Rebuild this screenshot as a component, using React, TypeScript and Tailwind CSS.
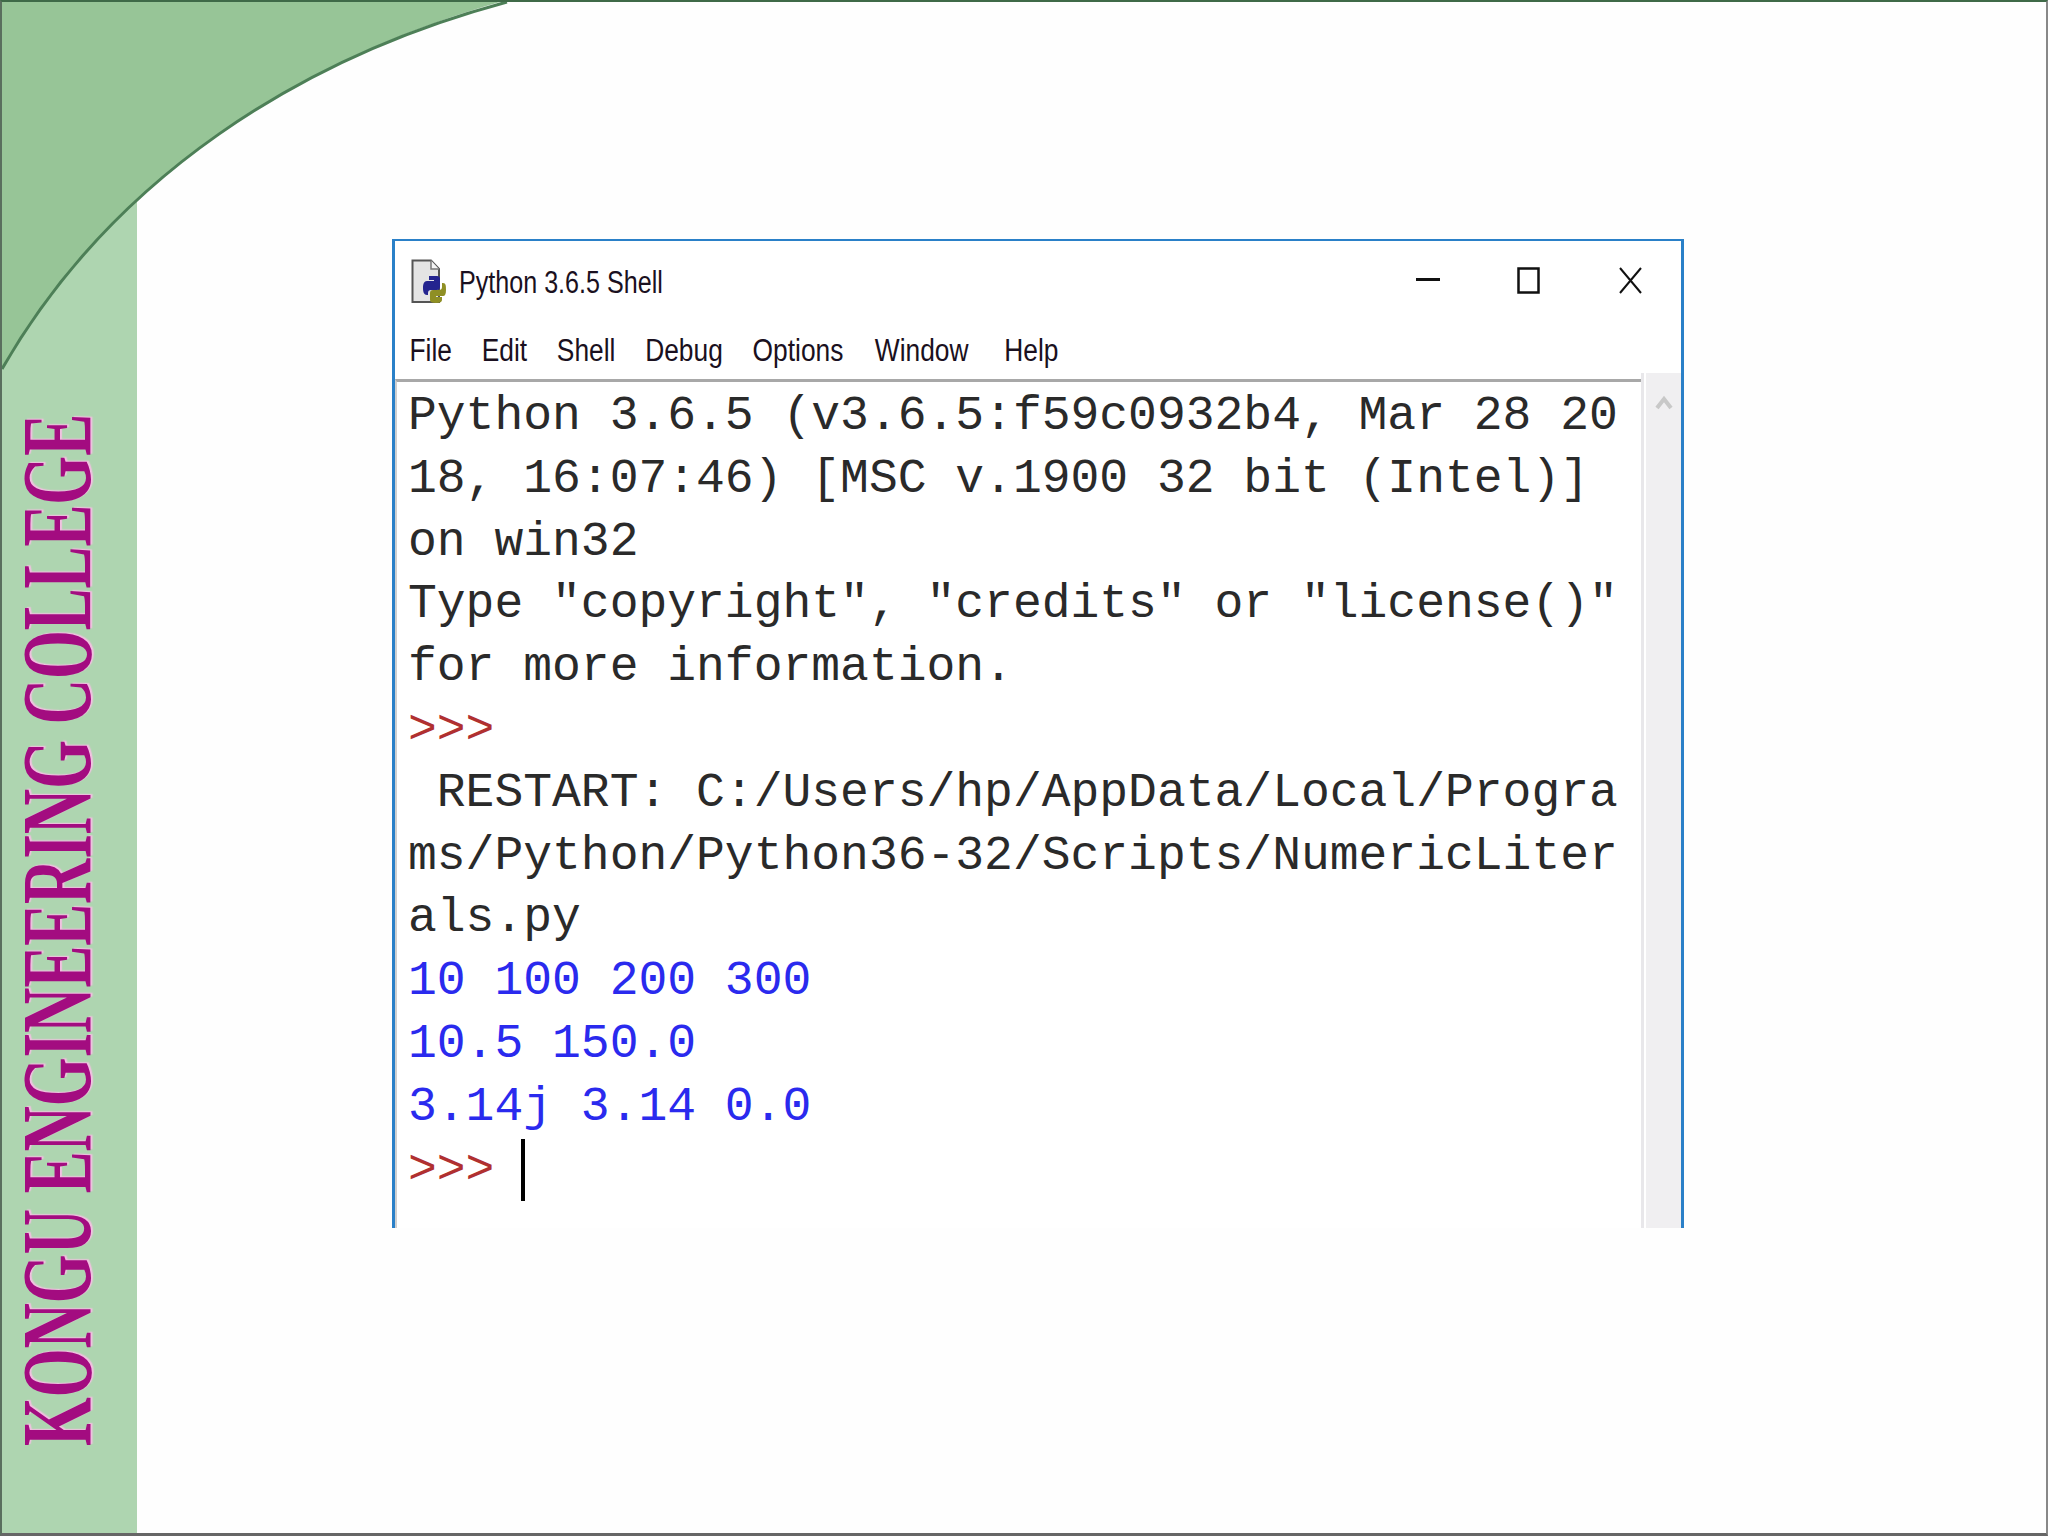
import React from 'react'

const MONO = 'font-["Liberation_Mono",monospace]'

const lines: { text: string; color: string }[] = [
  { text: 'Python 3.6.5 (v3.6.5:f59c0932b4, Mar 28 20', color: 'text-[#2a2a2a]' },
  { text: '18, 16:07:46) [MSC v.1900 32 bit (Intel)]', color: 'text-[#2a2a2a]' },
  { text: 'on win32', color: 'text-[#2a2a2a]' },
  { text: 'Type "copyright", "credits" or "license()"', color: 'text-[#2a2a2a]' },
  { text: 'for more information.', color: 'text-[#2a2a2a]' },
  { text: '>>>', color: 'text-[#b03030]' },
  { text: ' RESTART: C:/Users/hp/AppData/Local/Progra', color: 'text-[#2a2a2a]' },
  { text: 'ms/Python/Python36-32/Scripts/NumericLiter', color: 'text-[#2a2a2a]' },
  { text: 'als.py', color: 'text-[#2a2a2a]' },
  { text: '10 100 200 300', color: 'text-[#2a2aee]' },
  { text: '10.5 150.0', color: 'text-[#2a2aee]' },
  { text: '3.14j 3.14 0.0', color: 'text-[#2a2aee]' },
]

const menus: { label: string; extra?: string }[] = [
  { label: 'File' },
  { label: 'Edit' },
  { label: 'Shell' },
  { label: 'Debug' },
  { label: 'Options' },
  { label: 'Window', extra: 'ml-[2px]' },
  { label: 'Help', extra: 'ml-[7px]' },
]

function PythonFileIcon() {
  return (
    <svg width="36" height="46" viewBox="0 0 36 46" className="shrink-0">
      <path d="M1.5 1.5H20L28 10V43H1.5Z" fill="#e4e4e4" stroke="#555555" strokeWidth="2" />
      <path d="M20 1.5V10H28" fill="#f4f4f4" stroke="#777777" strokeWidth="1.5" />
      <path d="M18 17h8c2 0 3 1 3 3v8c0 2-1 3-3 3h-6c-2 0-3 1-3 3v2h-1c-3 0-4-3-4-7s1-7 4-7h7v-1h-5z" fill="#24248f" />
      <path d="M31 24h1c3 0 3 3 3 7s-1 6-3 6h-7v1h6v3c0 2-2 3-6 3s-6-1-6-3v-7c0-2 1-3 3-3h6c2 0 3-1 3-3z" fill="#8f8f24" />
    </svg>
  )
}

function WindowButtons() {
  return (
    <div className="flex items-center -mt-[4px]">
      <svg width="24" height="4" viewBox="0 0 24 4" className="mr-[77px]">
        <rect width="24" height="3" fill="#111111" />
      </svg>
      <svg width="23" height="27" viewBox="0 0 23 27" className="mr-[79px]">
        <rect x="1.5" y="1.5" width="20" height="24" fill="none" stroke="#111111" strokeWidth="2.5" />
      </svg>
      <svg width="23" height="27" viewBox="0 0 23 27" className="mr-[39px]">
        <path d="M1 1L22 26M22 1L1 26" stroke="#111111" strokeWidth="2" />
      </svg>
    </div>
  )
}

export default function App() {
  return (
    <div className="relative w-[2048px] h-[1536px] overflow-hidden bg-[#fefefe] border-b-[3px] border-l-2 border-r-2 border-t-2 border-b-[#666666] border-l-[#5a6f5e] border-r-[#888888] border-t-[#3f6a48] flex">
      {/* side band */}
      <div className="w-[135px] shrink-0 bg-[#aed5b0] flex items-end justify-center pb-[87px] pr-[24px]">
        <span className='[writing-mode:vertical-rl] rotate-180 scale-x-[1.58] font-["Liberation_Serif",serif] font-bold text-[62.75px] leading-none whitespace-pre text-[#a30c80] [text-shadow:1px_1px_1px_#f3c0e2]'>
          KONGU ENGINEERING COLLEGE
        </span>
      </div>

      {/* corner swoosh */}
      <svg width="520" height="372" viewBox="0 0 520 372" className="absolute left-0 top-0">
        <path d="M-2 -2H505C300 55 110 175 0 367Z" fill="#97c597" />
        <path d="M505 0C300 55 110 175 0 367" fill="none" stroke="#4d7f57" strokeWidth="3" />
      </svg>

      {/* idle shell window */}
      <div className="ml-[255px] mt-[237px] w-[1292px] h-[989px] border-t-[2px] border-x-[3px] border-[#2a80c8] bg-white flex flex-col relative">
        <div className="h-[82px] flex items-center justify-between pl-[16px]">
          <div className="flex items-center gap-[12px]">
            <PythonFileIcon />
            <span className='font-["Liberation_Sans",sans-serif] text-[31px] leading-none text-[#1a1020] scale-x-[0.81] origin-left'>
              Python 3.6.5 Shell
            </span>
          </div>
          <WindowButtons />
        </div>

        <div className='h-[50px] pt-[4px] flex items-center gap-[35px] pl-[17px] font-["Liberation_Sans",sans-serif] text-[31px] leading-none text-[#1a1020] scale-x-[0.85] origin-left'>
          {menus.map(m => (
            <span key={m.label} className={m.extra}>{m.label}</span>
          ))}
        </div>

        <div className="flex-1 flex min-h-0">
          <div className="flex-1 min-w-0 pt-[6px] flex">
            <div className={`flex-1 border-t-[3px] border-t-[#a8a8a8] border-l-2 border-l-[#d0d0d0] pl-[11px] pt-[3px] text-[48px] leading-[62.8px] ${MONO}`}>
              {lines.map((l, i) => (
                <div key={i} className={`h-[62.8px] whitespace-pre ${l.color}`}>
                  {l.text}
                </div>
              ))}
              <div className="h-[62.8px] flex items-center whitespace-pre text-[#b03030]">
                <span>{'>>>'}</span>
                <span className="ml-[27px] w-[4px] h-[62px] bg-black" />
              </div>
            </div>
          </div>
          <div className="w-[3px] bg-[#e8e7ea] ml-0" />
          <div className="w-[2px] bg-white" />
          <div className="w-[35px] bg-[#f0eff1] flex justify-center pt-[22px]">
            <svg width="18" height="16" viewBox="0 0 18 16">
              <path d="M2 13L9 4L16 13" fill="none" stroke="#c8c8c8" strokeWidth="4" />
            </svg>
          </div>
        </div>
      </div>
    </div>
  )
}
